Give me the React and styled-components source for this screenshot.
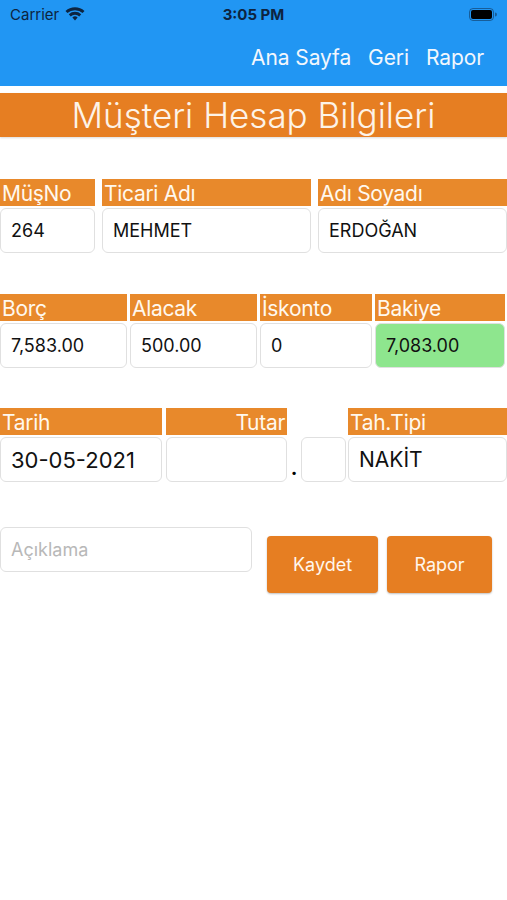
import styled, { createGlobalStyle } from "styled-components";

const GlobalStyle = createGlobalStyle`
  html, body {
    margin: 0;
    padding: 0;
    background: #fff;
    font-family: Inter, "Liberation Sans", sans-serif;
  }
`;

const Page = styled.div`
  width: 507px;
  min-height: 900px;
  background: #fff;
`;

const Header = styled.div`
  background: #2196f3;
  height: 86px;
  display: flex;
  flex-direction: column;
`;

const StatusBar = styled.div`
  height: 28px;
  display: flex;
  align-items: center;
  justify-content: space-between;
  padding: 0 10px;
  color: #0d2440;
  font-size: 15px;
`;

const Carrier = styled.div`
  display: flex;
  align-items: center;
  gap: 6px;
  width: 110px;
`;

const Time = styled.div`
  font-weight: 700;
`;

const Battery = styled.div`
  width: 110px;
  display: flex;
  justify-content: flex-end;
`;

const Nav = styled.div`
  flex: 1;
  display: flex;
  justify-content: flex-end;
  align-items: center;
  gap: 17px;
  padding: 0 23px 0 0;
`;

const NavLink = styled.span`
  color: #f2f7fd;
  font-size: 21px;
  letter-spacing: -0.1px;
`;

const TitleBar = styled.div`
  margin-top: 7px;
  height: 44px;
  background: #e67e22;
  color: #fdf3e8;
  font-size: 35px;
  font-weight: 300;
  display: flex;
  align-items: center;
  justify-content: center;
  box-shadow: 0 1px 2px rgba(0, 0, 0, 0.15);
`;

const Content = styled.div`
  display: flex;
  flex-direction: column;
`;

const Row = styled.div`
  display: flex;
  gap: ${(p) => p.$gap ?? 7}px;
  margin-top: ${(p) => p.$top}px;
  align-items: flex-start;
`;

const Field = styled.div`
  width: ${(p) => p.$w}px;
  flex-shrink: 0;
  display: flex;
  flex-direction: column;
  gap: 2px;
`;

const Label = styled.div`
  background: #e8892b;
  color: #fff8ee;
  font-size: 21px;
  height: 27px;
  line-height: 29px;
  padding: 0 2px;
  text-align: ${(p) => (p.$right ? "right" : "left")};
  white-space: nowrap;
  overflow: hidden;
  letter-spacing: -0.3px;
`;

const Box = styled.div`
  height: 45px;
  box-sizing: border-box;
  border: 1px solid #e0e0e0;
  border-radius: 6px;
  background: ${(p) => (p.$green ? "#8ee68e" : "#fff")};
  display: flex;
  align-items: center;
  padding-left: 10px;
  font-size: ${(p) => p.$fs || 18}px;
  color: ${(p) => (p.$hint ? "#b8b8b8" : "#111")};
`;

const Spacer = styled.div`
  width: ${(p) => p.$w}px;
  flex-shrink: 0;
`;

const Dot = styled.div`
  width: 14px;
  flex-shrink: 0;
  height: 45px;
  margin-top: 29px;
  display: flex;
  align-items: flex-end;
  justify-content: center;
  padding-bottom: 4px;
  box-sizing: border-box;
  font-size: 20px;
  font-weight: 700;
  line-height: 1;
`;

const SmallBox = styled(Box)`
  width: 45px;
  flex-shrink: 0;
  margin-top: 29px;
  padding: 0;
`;

const Button = styled.button`
  width: ${(p) => p.$w}px;
  flex-shrink: 0;
  height: 57px;
  margin-top: 9px;
  border: none;
  border-radius: 4px;
  background: #e67e22;
  color: #fff6ec;
  font-family: inherit;
  font-size: 18px;
  box-shadow: 0 1px 2px rgba(0, 0, 0, 0.25);
`;

const Wifi = () => (
  <svg width="20" height="14" viewBox="0 0 20 14">
    <path d="M10 13.5l2.6-3.1a4 4 0 0 0-5.2 0z" fill="#0d2440" />
    <path d="M3.8 7.2a9 9 0 0 1 12.4 0l-1.9 2.2a6.2 6.2 0 0 0-8.6 0z" fill="#0d2440" />
    <path d="M0.5 3.9a14 14 0 0 1 19 0l-1.9 2.2a11.2 11.2 0 0 0-15.2 0z" fill="#0d2440" />
  </svg>
);

const BatteryIcon = () => (
  <svg width="28" height="13" viewBox="0 0 28 13">
    <rect x="0.5" y="0.5" width="24" height="12" rx="3.5" fill="none" stroke="#0d2440" opacity="0.5" />
    <rect x="2" y="2" width="21" height="9" rx="2" fill="#000" />
    <path d="M26 4.5v4a2 2 0 0 0 0-4z" fill="#0d2440" opacity="0.5" />
  </svg>
);

const App = () => (
  <Page>
    <GlobalStyle />
    <Header>
      <StatusBar>
        <Carrier>
          Carrier <Wifi />
        </Carrier>
        <Time>3:05 PM</Time>
        <Battery>
          <BatteryIcon />
        </Battery>
      </StatusBar>
      <Nav>
        <NavLink>Ana Sayfa</NavLink>
        <NavLink>Geri</NavLink>
        <NavLink>Rapor</NavLink>
      </Nav>
    </Header>
    <TitleBar>Müşteri Hesap Bilgileri</TitleBar>
    <Content>
      <Row $top={42}>
        <Field $w={95}>
          <Label>MüşNo</Label>
          <Box>264</Box>
        </Field>
        <Field $w={209}>
          <Label>Ticari Adı</Label>
          <Box>MEHMET</Box>
        </Field>
        <Field $w={189}>
          <Label>Adı Soyadı</Label>
          <Box>ERDOĞAN</Box>
        </Field>
      </Row>
      <Row $top={41} $gap={3}>
        <Field $w={127}>
          <Label>Borç</Label>
          <Box>7,583.00</Box>
        </Field>
        <Field $w={127}>
          <Label>Alacak</Label>
          <Box>500.00</Box>
        </Field>
        <Field $w={112}>
          <Label>İskonto</Label>
          <Box>0</Box>
        </Field>
        <Field $w={130}>
          <Label>Bakiye</Label>
          <Box $green>7,083.00</Box>
        </Field>
      </Row>
      <Row $top={40} $gap={0}>
        <Field $w={162}>
          <Label>Tarih</Label>
          <Box $fs={22}>30-05-2021</Box>
        </Field>
        <Spacer $w={4} />
        <Field $w={121}>
          <Label $right>Tutar</Label>
          <Box />
        </Field>
        <Dot>.</Dot>
        <SmallBox />
        <Spacer $w={2} />
        <Field $w={159}>
          <Label>Tah.Tipi</Label>
          <Box $fs={21}>NAKİT</Box>
        </Field>
      </Row>
      <Row $top={45} $gap={0}>
        <Field $w={252}>
          <Box $hint>Açıklama</Box>
        </Field>
        <Spacer $w={15} />
        <Button $w={111}>Kaydet</Button>
        <Spacer $w={9} />
        <Button $w={105}>Rapor</Button>
      </Row>
    </Content>
  </Page>
);

export default App;
